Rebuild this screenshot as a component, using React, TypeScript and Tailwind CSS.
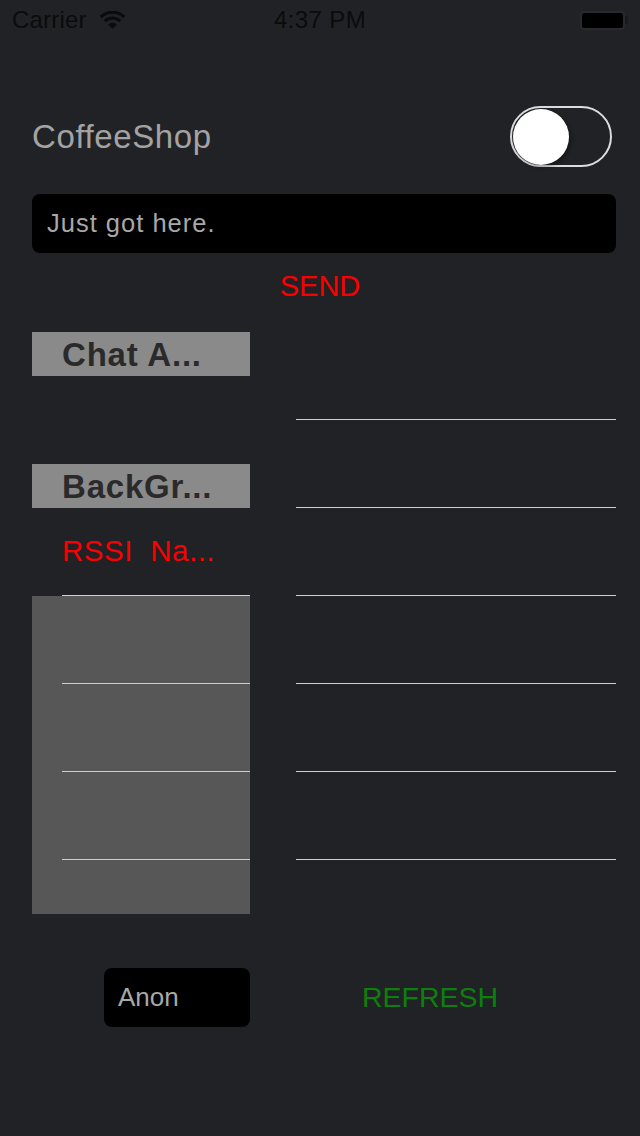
import React from 'react';

const font = { fontFamily: '"Liberation Sans", Arial, sans-serif' };

const Wifi = () => (
  <svg width="25" height="19" viewBox="0 0 24 18" className="ml-[13px]">
    <path d="M12 17 L7.8 12.8 A6 6 0 0 1 16.2 12.8 Z" fill="#0b0b0c" />
    <path d="M4.6 9.6 A10.5 10.5 0 0 1 19.4 9.6" stroke="#0b0b0c" strokeWidth="3" fill="none" />
    <path d="M0.7 5.7 A16 16 0 0 1 23.3 5.7" stroke="#0b0b0c" strokeWidth="3" fill="none" />
  </svg>
);

const StatusBar = () => (
  <div className="relative h-[40px] flex items-center px-[12px] text-[24px] text-[#0b0b0c]">
    <span className="tracking-[0.2px]">Carrier</span>
    <Wifi />
    <span className="absolute left-0 right-0 text-center pointer-events-none tracking-[0.4px]">4:37 PM</span>
    <div className="ml-auto flex items-center">
      <div className="w-[45px] h-[19px] rounded-[4px] border-2 border-[#2a2a2c] bg-black" />
      <div className="w-[3px] h-[8px] bg-[#1a1a1b] rounded-r-[2px]" />
    </div>
  </div>
);

const Toggle = () => (
  <div className="w-[102px] h-[61px] rounded-full border-2 border-[#dcdcdc] flex items-center px-[1px]">
    <div className="w-[56px] h-[56px] rounded-full bg-white shadow-[2px_2px_4px_rgba(0,0,0,0.35)]" />
  </div>
);

const SectionHeader = ({ label }: { label: string }) => (
  <div className="h-[44px] bg-[#8a8a8a] pl-[30px] flex items-center text-[33px] font-bold text-[#2a2a2b] leading-none tracking-[0.8px]">
    {label}
  </div>
);

export default function App() {
  const rightRows = [0, 1, 2, 3, 4, 5];
  const leftRows = [0, 1, 2];

  return (
    <div className="w-[640px] h-[1136px] bg-[#212226] overflow-hidden" style={font}>
      <StatusBar />

      <div className="mt-[66px] flex items-center justify-between pl-[32px] pr-[28px] h-[61px]">
        <span className="text-[33px] text-[#a3a3a3] tracking-[0.6px]">CoffeeShop</span>
        <Toggle />
      </div>

      <div className="mt-[27px] ml-[32px] mr-[24px] h-[59px] bg-black rounded-[8px] flex items-center pl-[15px]">
        <span className="text-[25.5px] text-[#a8a8a8] tracking-[1px]">Just got here.</span>
      </div>

      <div className="mt-[18px] h-[32px] flex justify-center items-center text-[29px] text-[#fa0000]">SEND</div>

      <div className="mt-[29px] flex pl-[32px] pr-[24px] gap-[46px]">
        <div className="w-[218px] flex flex-col">
          <SectionHeader label="Chat A..." />
          <div className="h-[88px]" />
          <SectionHeader label="BackGr..." />
          <div className="h-[88px] pl-[30px]">
            <div className="h-full border-b border-[#cfcfcf] flex items-center">
              <span className="text-[29.5px] text-[#fa0000] whitespace-pre tracking-[0.5px]">RSSI  Na...</span>
            </div>
          </div>
          <div className="h-[318px] bg-[#575757] flex flex-col">
            {leftRows.map((r) => (
              <div key={r} className="h-[88px] pl-[30px]">
                <div className="h-full border-b border-[#cfcfcf]" />
              </div>
            ))}
          </div>
        </div>

        <div className="flex-1 flex flex-col">
          {rightRows.map((r) => (
            <div key={r} className="h-[88px] border-b border-[#cfcfcf]" />
          ))}
        </div>
      </div>

      <div className="mt-[54px] flex items-center">
        <div className="ml-[104px] w-[146px] h-[59px] bg-black rounded-[8px] flex items-center pl-[14px]">
          <span className="text-[26px] text-[#a8a8a8]">Anon</span>
        </div>
        <div className="flex-1 flex justify-center pr-[30px]">
          <span className="text-[28.5px] text-[#0d7f0d]">REFRESH</span>
        </div>
      </div>
    </div>
  );
}
